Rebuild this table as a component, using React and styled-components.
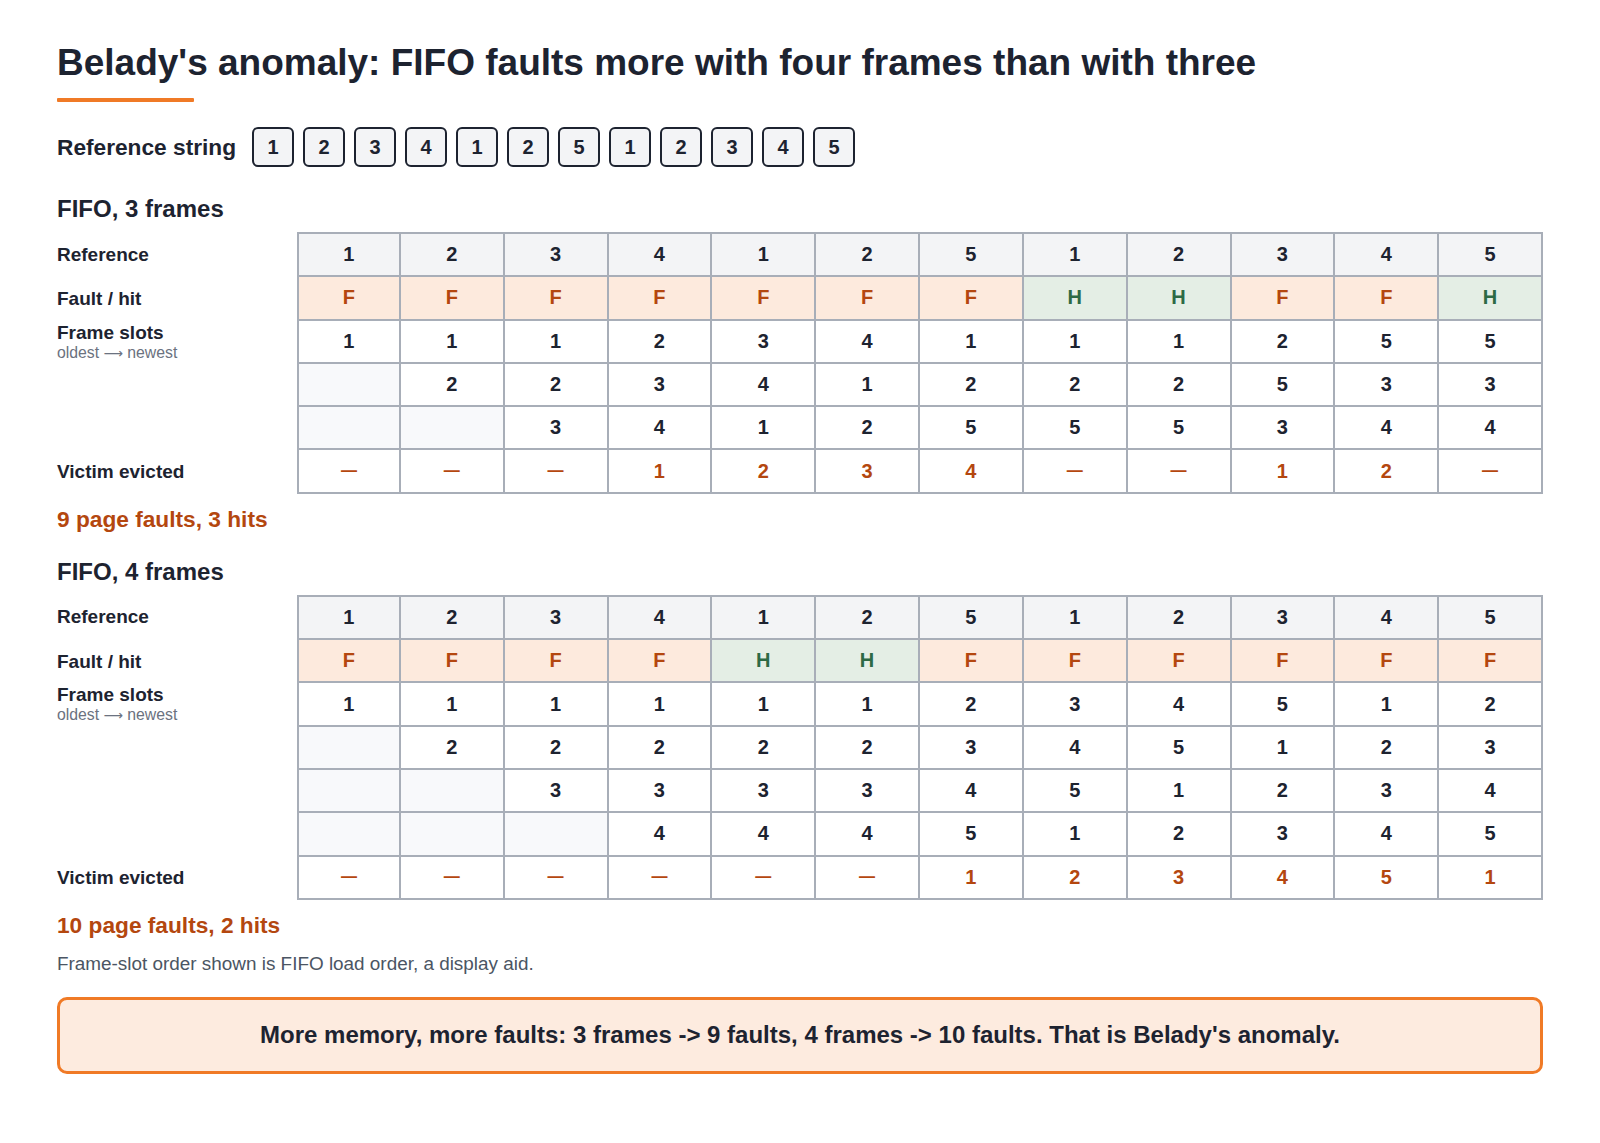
import React from 'react';
import styled, { createGlobalStyle } from 'styled-components';

const INK = '#1d2330';
const ORANGE = '#f07a26';
const RUST = '#b4470f';
const GREEN = '#2d6a45';
const LINE = '#a8aeb8';

const GlobalStyle = createGlobalStyle`
  html, body { margin: 0; padding: 0; background: #ffffff; }
  body {
    font-family: "Liberation Sans", Arial, Helvetica, sans-serif;
    color: ${INK};
  }
`;

const Page = styled.main`
  display: flex;
  flex-direction: column;
  padding: 42px 57px 48px 57px;
`;

const Title = styled.h1`
  margin: 0;
  font-size: 37px;
  line-height: 42px;
  font-weight: 700;
  color: ${INK};
`;

const Accent = styled.div`
  width: 137px;
  height: 4px;
  margin-top: 14px;
  background: ${ORANGE};
  border-radius: 1px;
`;

const RefRow = styled.div`
  display: flex;
  align-items: center;
  gap: 16px;
  margin-top: 25px;
`;

const RefLabel = styled.span`
  font-size: 22.7px;
  line-height: 26px;
  font-weight: 700;
`;

const RefBoxes = styled.div`
  display: flex;
  gap: 9px;
`;

const RefBox = styled.div`
  box-sizing: border-box;
  width: 42px;
  height: 40px;
  display: flex;
  align-items: center;
  justify-content: center;
  border: 2px solid ${INK};
  border-radius: 6px;
  background: #f3f4f6;
  font-size: 20px;
  font-weight: 700;
`;

const Section = styled.section`
  display: flex;
  flex-direction: column;
  margin-top: ${p => p.$gap}px;
`;

const SectionTitle = styled.h2`
  margin: 0;
  font-size: 24px;
  line-height: 29px;
  font-weight: 700;
  color: ${INK};
`;

const Grid = styled.div`
  display: grid;
  grid-template-columns: 240px repeat(12, 1fr);
  margin-top: 9px;
`;

const RowLabel = styled.div`
  align-self: center;
  font-size: 19px;
  line-height: 22px;
  font-weight: 700;
`;

const SlotsLabel = styled.div`
  grid-row: span ${p => p.$span};
  align-self: start;
  padding-top: 1px;
  display: flex;
  flex-direction: column;
`;

const SlotsTitle = styled.span`
  font-size: 19px;
  line-height: 22px;
  font-weight: 700;
`;

const SlotsHint = styled.span`
  font-size: 15.8px;
  line-height: 18px;
  font-weight: 400;
  color: #6b7280;
`;

const Arrow = styled.span`
  font-family: "DejaVu Sans", sans-serif;
  font-size: 13.5px;
`;

const tones = {
  head: { bg: '#f3f4f6', fg: INK },
  fault: { bg: '#fdeadd', fg: RUST },
  hit: { bg: '#e4eee5', fg: GREEN },
  slot: { bg: '#ffffff', fg: INK },
  empty: { bg: '#f8f9fb', fg: INK },
  victim: { bg: '#ffffff', fg: RUST },
};

const Cell = styled.div`
  height: 41.3px;
  display: flex;
  align-items: center;
  justify-content: center;
  font-size: 20px;
  font-weight: 700;
  border-right: 2px solid ${LINE};
  border-bottom: 2px solid ${LINE};
  ${p => (p.$first ? `border-left: 2px solid ${LINE};` : '')}
  ${p => (p.$top ? `border-top: 2px solid ${LINE};` : '')}
  background: ${p => tones[p.$tone].bg};
  color: ${p => tones[p.$tone].fg};
`;

const Dash = styled.span`
  font-size: 16px;
`;

const Summary = styled.p`
  margin: 12px 0 0;
  font-size: 22.7px;
  line-height: 27px;
  font-weight: 700;
  color: ${RUST};
`;

const Note = styled.p`
  margin: 14px 0 0;
  font-size: 18.9px;
  line-height: 22px;
  color: #4b5563;
`;

const Banner = styled.div`
  margin-top: 22px;
  padding: 21.5px 24px;
  border: 3px solid ${ORANGE};
  border-radius: 10px;
  background: #fdebdf;
  text-align: center;
  font-size: 24px;
  line-height: 28px;
  font-weight: 700;
  color: ${INK};
`;

const REFS = [1, 2, 3, 4, 1, 2, 5, 1, 2, 3, 4, 5];

function simulateFifo(refs, frames) {
  const queue = [];
  return refs.map(page => {
    const hit = queue.includes(page);
    let victim = null;
    if (!hit) {
      if (queue.length === frames) victim = queue.shift();
      queue.push(page);
    }
    return { page, hit, victim, slots: [...queue] };
  });
}

function FifoTable({ frames, gap }) {
  const steps = simulateFifo(REFS, frames);
  const faults = steps.filter(s => !s.hit).length;
  const hits = steps.length - faults;
  const slotRows = Array.from({ length: frames }, (_, r) => r);

  return (
    <Section $gap={gap}>
      <SectionTitle>FIFO, {frames} frames</SectionTitle>
      <Grid>
        <RowLabel>Reference</RowLabel>
        {steps.map((s, i) => (
          <Cell key={`r${i}`} $tone="head" $first={i === 0} $top>
            {s.page}
          </Cell>
        ))}

        <RowLabel>Fault / hit</RowLabel>
        {steps.map((s, i) => (
          <Cell key={`f${i}`} $tone={s.hit ? 'hit' : 'fault'} $first={i === 0}>
            {s.hit ? 'H' : 'F'}
          </Cell>
        ))}

        <SlotsLabel $span={frames}>
          <SlotsTitle>Frame slots</SlotsTitle>
          <SlotsHint>
            oldest <Arrow>⟶</Arrow> newest
          </SlotsHint>
        </SlotsLabel>
        {slotRows.map(r =>
          steps.map((s, i) => {
            const v = s.slots[r];
            return (
              <Cell key={`s${r}-${i}`} $tone={v === undefined ? 'empty' : 'slot'} $first={i === 0}>
                {v ?? ''}
              </Cell>
            );
          })
        )}

        <RowLabel>Victim evicted</RowLabel>
        {steps.map((s, i) => (
          <Cell key={`v${i}`} $tone="victim" $first={i === 0}>
            {s.victim === null ? <Dash>—</Dash> : s.victim}
          </Cell>
        ))}
      </Grid>
      <Summary>
        {faults} page faults, {hits} hits
      </Summary>
    </Section>
  );
}

export default function App() {
  return (
    <>
      <GlobalStyle />
      <Page>
        <Title>Belady's anomaly: FIFO faults more with four frames than with three</Title>
        <Accent />
        <RefRow>
          <RefLabel>Reference string</RefLabel>
          <RefBoxes>
            {REFS.map((r, i) => (
              <RefBox key={i}>{r}</RefBox>
            ))}
          </RefBoxes>
        </RefRow>
        <FifoTable frames={3} gap={27} />
        <FifoTable frames={4} gap={24} />
        <Note>Frame-slot order shown is FIFO load order, a display aid.</Note>
        <Banner>
          More memory, more faults: 3 frames -&gt; 9 faults, 4 frames -&gt; 10 faults. That is Belady's anomaly.
        </Banner>
      </Page>
    </>
  );
}
